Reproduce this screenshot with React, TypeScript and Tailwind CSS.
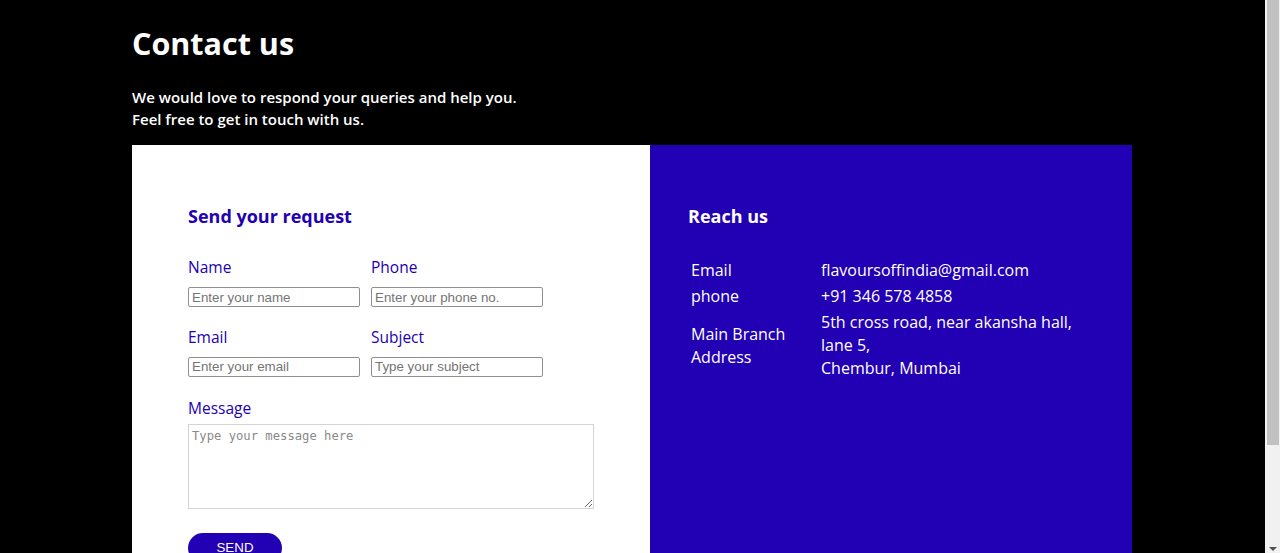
const font = "font-['Comic_Sans_MS','Open_Sans',sans-serif]";

const Field = ({ label, placeholder }: { label: string; placeholder: string }) => (
  <div className="w-[183px]">
    <label className="block text-[15.5px] leading-[22px] text-[#2200b3]">{label}</label>
    <input
      placeholder={placeholder}
      className="mt-[9px] h-[20px] w-[172px] border border-[#8f8f8f] rounded-[2px] px-[3px] font-['Liberation_Sans',Arial,sans-serif] text-[13.33px] text-black placeholder:text-[#757575] outline-none"
    />
  </div>
);

export default function App() {
  return (
    <div className={`min-h-[690px] bg-black pr-[16px] ${font}`}>
      <div className="mx-auto w-[1000px] pb-[10px]">
        {/* HEADER */}
        <h1 className="pt-[23px] text-[30.5px] font-bold leading-[40px] text-white">Contact us</h1>
        <p className="mt-[23px] text-[15px] font-semibold leading-[22px] text-white">
          We would love to respond your queries and help you.
          <br />
          Feel free to get in touch with us.
        </p>

        <div className="mt-[15px] flex">
          {/* FORM */}
          <section className="w-[518px] bg-white pl-[56px] pt-[58px] pb-[60px]">
            <h2 className="text-[18px] font-bold leading-[26px] text-[#2200b3]">Send your request</h2>

            <div className="mt-[27px] flex">
              <Field label="Name" placeholder="Enter your name" />
              <Field label="Phone" placeholder="Enter your phone no." />
            </div>
            <div className="mt-[18px] flex">
              <Field label="Email" placeholder="Enter your email" />
              <Field label="Subject" placeholder="Type your subject" />
            </div>

            <label className="mt-[20px] block text-[15.5px] leading-[22px] text-[#2200b3]">Message</label>
            <textarea
              placeholder="Type your message here"
              className="mt-[5px] block h-[85px] w-[406px] border border-[#d4d4d4] px-[3px] py-[2px] font-['DejaVu_Sans_Mono',monospace] text-[12.2px] text-black placeholder:text-[#8a8a8a] outline-none"
            />

            <button className="mt-[24px] h-[30px] w-[94px] rounded-full bg-[#2200b3] font-['Liberation_Sans',Arial,sans-serif] text-[13.33px] text-white">
              SEND
            </button>
          </section>

          {/* REACH US */}
          <section className="flex-1 bg-[#2200b3] pl-[38px] pt-[58px]">
            <h2 className="text-[18px] font-bold leading-[26px] text-white">Reach us</h2>

            <div className="ml-[3px] mt-[30px] grid grid-cols-[130px_1fr] items-center gap-y-[3px] text-[16px] font-medium leading-[23px] text-white">
              <div>Email</div>
              <div>flavoursoffindia@gmail.com</div>
              <div>phone</div>
              <div>+91 346 578 4858</div>
              <div>
                Main Branch
                <br />
                Address
              </div>
              <div>
                5th cross road, near akansha hall,
                <br />
                lane 5,
                <br />
                Chembur, Mumbai
              </div>
            </div>
          </section>
        </div>
      </div>

      {/* browser scrollbar */}
      <div className="fixed right-0 top-0 flex h-screen w-[15px] flex-col bg-[#f1f1f1]">
        <div className="mx-auto h-[445px] w-[12px] bg-[#c1c1c1]" />
        <div className="mt-auto mb-[2px] flex justify-center">
          <div className="h-0 w-0 border-x-[4px] border-t-[4px] border-x-transparent border-t-[#505050]" />
        </div>
      </div>
    </div>
  );
}
